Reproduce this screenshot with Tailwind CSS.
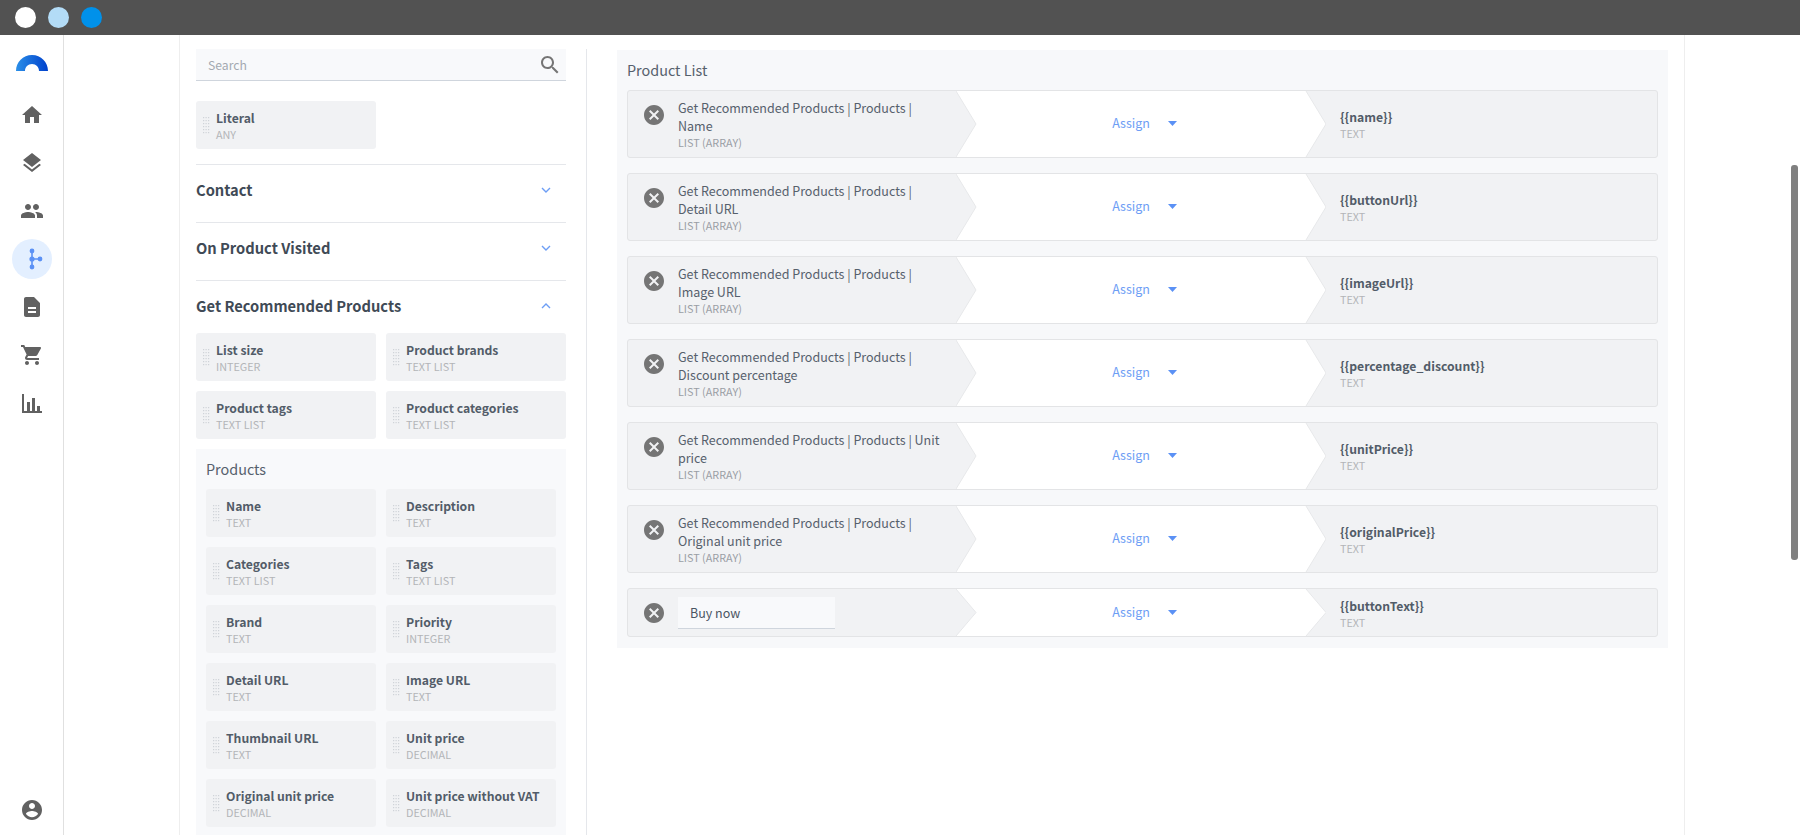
<!DOCTYPE html>
<html lang="en">

<head>
    <meta charset="UTF-8">
    <meta name="viewport" content="width=device-width, initial-scale=1.0">
    <title>Journey Builder</title>
    <script src="https://cdn.jsdelivr.net/npm/@tailwindcss/browser@4"></script>
</head>

<body class="h-screen overflow-hidden bg-white font-['Noto_Sans_CJK_JP','Liberation_Sans',sans-serif] text-[#4b5563]">
    <!-- Top bar -->
    <header class="flex h-[35px] items-center gap-[12px] bg-[#525252] pl-[15px]">
        <span class="h-[21px] w-[21px] rounded-full bg-white"></span>
        <span class="h-[21px] w-[21px] rounded-full bg-[#b3dcf7]"></span>
        <span class="h-[21px] w-[21px] rounded-full bg-[#0091ea]"></span>
    </header>

    <div class="flex h-[800px]">
        <!-- Sidebar -->
        <aside class="flex w-[64px] shrink-0 flex-col items-center border-r border-[#e0e0e0] text-[#616161]">
            <svg class="mt-[20px] h-[16px] w-[32px]" viewBox="0 0 32 16">
                <defs>
                    <linearGradient id="logoGrad" x1="0" x2="1" y1="0" y2="0">
                        <stop offset="0" stop-color="#2b8fe8"></stop>
                        <stop offset="1" stop-color="#0041cc"></stop>
                    </linearGradient>
                </defs>
                <path fill="url(#logoGrad)" d="M0 16C0 7 7 0 16 0s16 7 16 16H23C23 12 20 9 16 9s-7 3-7 7z"></path>
            </svg>
            <svg class="mt-[32px] h-[24px] w-[24px]" viewBox="0 0 24 24" fill="currentColor"><path d="M10 20v-6h4v6h5v-8h3L12 3 2 12h3v8z"></path></svg>
            <svg class="mt-[24px] h-[24px] w-[24px]" viewBox="0 0 24 24" fill="currentColor"><path d="M11.99 18.54l-7.37-5.73L3 14.07l9 7 9-7-1.63-1.27-7.38 5.74zM12 16l7.36-5.73L21 9l-9-7-9 7 1.63 1.27L12 16z"></path></svg>
            <svg class="mt-[24px] h-[24px] w-[24px]" viewBox="0 0 24 24" fill="currentColor"><path d="M16 11c1.66 0 2.99-1.34 2.99-3S17.66 5 16 5c-1.66 0-3 1.34-3 3s1.34 3 3 3zm-8 0c1.66 0 2.99-1.34 2.99-3S9.66 5 8 5C6.34 5 5 6.34 5 8s1.34 3 3 3zm0 2c-2.33 0-7 1.17-7 3.5V19h14v-2.5c0-2.33-4.67-3.5-7-3.5zm8 0c-.29 0-.62.02-.97.05 1.16.84 1.97 1.97 1.97 3.45V19h6v-2.5c0-2.33-4.67-3.5-7-3.5z"></path></svg>
            <div class="mt-[16px] flex h-[40px] w-[40px] items-center justify-center rounded-full bg-[#e3efff]">
                <svg class="h-[24px] w-[24px]" viewBox="0 0 24 24" fill="#5b91f5" stroke="#5b91f5" stroke-width="1.6">
                    <path d="M12 4v16M12 12h8"></path>
                    <circle cx="12" cy="4" r="1.6"></circle>
                    <circle cx="12" cy="12" r="1.8"></circle>
                    <circle cx="12" cy="20" r="1.6"></circle>
                    <circle cx="20" cy="12" r="1.6"></circle>
                </svg>
            </div>
            <svg class="mt-[16px] h-[24px] w-[24px]" viewBox="0 0 24 24" fill="currentColor"><path d="M14 2H6c-1.1 0-1.99.9-1.99 2L4 20c0 1.1.89 2 1.99 2H18c1.1 0 2-.9 2-2V8l-6-6zm2 16H8v-2h8v2zm0-4H8v-2h8v2z"></path></svg>
            <svg class="mt-[24px] h-[24px] w-[24px]" viewBox="0 0 24 24" fill="currentColor"><path d="M7 18c-1.1 0-1.99.9-1.99 2S5.9 22 7 22s2-.9 2-2-.9-2-2-2zM1 2v2h2l3.6 7.59-1.35 2.45c-.16.28-.25.61-.25.96 0 1.1.9 2 2 2h12v-2H7.42c-.14 0-.25-.11-.25-.25l.03-.12.9-1.63h7.45c.75 0 1.41-.41 1.75-1.03l3.58-6.49c.08-.14.12-.31.12-.48 0-.55-.45-1-1-1H5.21l-.94-2H1zm16 16c-1.1 0-1.99.9-1.99 2s.89 2 1.99 2 2-.9 2-2-.9-2-2-2z"></path></svg>
            <svg class="mt-[24px] h-[24px] w-[24px]" viewBox="0 0 24 24" fill="currentColor"><path d="M2 3h2v17h18v2H2zM7 11h3v9H7zM12 7h3v13h-3zM17 15h3v5h-3z"></path></svg>
            <svg class="mt-auto mb-[13px] h-[24px] w-[24px]" viewBox="0 0 24 24" fill="currentColor"><path d="M12 2C6.48 2 2 6.48 2 12s4.48 10 10 10 10-4.48 10-10S17.52 2 12 2zm0 3c1.66 0 3 1.34 3 3s-1.34 3-3 3-3-1.34-3-3 1.34-3 3-3zm0 14.2c-2.5 0-4.71-1.28-6-3.22.03-1.99 4-3.08 6-3.08 1.99 0 5.97 1.09 6 3.08-1.29 1.94-3.5 3.22-6 3.22z"></path></svg>
        </aside>

        <!-- Main panel -->
        <main class="ml-[115px] flex h-full w-[1506px] border-x border-[#eeeeee] pt-[14px] pl-[16px]">
            <!-- Field picker -->
            <section class="w-[370px] shrink-0">
                <div class="flex h-[32px] items-center justify-between border-b border-[#cfd5dd] bg-[#f8f9fb] pr-[4px] pl-[12px]">
                    <span class="pt-[2px] text-[12.2px] text-[#a3a9b1]">Search</span>
                    <svg class="h-[24px] w-[24px]" viewBox="0 0 24 24" fill="#757575"><path d="M15.5 14h-.79l-.28-.27C15.41 12.59 16 11.11 16 9.5 16 5.91 13.09 3 9.5 3S3 5.91 3 9.5 5.91 16 9.5 16c1.61 0 3.09-.59 4.23-1.57l.27.28v.79l5 4.99L20.49 19l-4.99-5zm-6 0C7.01 14 5 11.99 5 9.5S7.01 5 9.5 5 14 7.01 14 9.5 11.99 14 9.5 14z"></path></svg>
                </div>
                <div id="literalGrid" class="mt-[20px] grid grid-cols-2 gap-[10px]"></div>

                <div class="mt-[15px] flex h-[58px] items-center justify-between border-t border-[#e5e7eb] pb-[7px]">
                    <h3 class="text-[14.7px] leading-[22px] font-bold text-[#3f4a56]">Contact</h3>
                    <svg class="mr-[15px] h-[6px] w-[10px]" viewBox="0 0 10 6" fill="none" stroke="#6d9ef5" stroke-width="1.4"><path d="M1 1l4 4 4-4"></path></svg>
                </div>
                <div class="flex h-[58px] items-center justify-between border-t border-[#e5e7eb] pb-[7px]">
                    <h3 class="text-[14.7px] leading-[22px] font-bold text-[#3f4a56]">On Product Visited</h3>
                    <svg class="mr-[15px] h-[6px] w-[10px]" viewBox="0 0 10 6" fill="none" stroke="#6d9ef5" stroke-width="1.4"><path d="M1 1l4 4 4-4"></path></svg>
                </div>
                <div class="flex h-[53px] items-center justify-between border-t border-[#e5e7eb] pb-[2px]">
                    <h3 class="text-[14.7px] leading-[22px] font-bold text-[#3f4a56]">Get Recommended Products</h3>
                    <svg class="mr-[15px] h-[6px] w-[10px]" viewBox="0 0 10 6" fill="none" stroke="#6d9ef5" stroke-width="1.4"><path d="M1 5l4-4 4 4"></path></svg>
                </div>
                <div id="recommendedGrid" class="grid grid-cols-2 gap-[10px]"></div>

                <div class="mt-[10px] bg-[#f8f9fb] px-[10px] pb-[10px]">
                    <h4 class="flex h-[40px] items-center text-[14.4px] font-normal text-[#56606c]">Products</h4>
                    <div id="productsGrid" class="grid grid-cols-2 gap-[10px]"></div>
                </div>
            </section>

            <!-- Divider -->
            <div class="mr-[30px] ml-[20px] h-full w-px shrink-0 bg-[#e5e7eb]"></div>

            <!-- Mapping list -->
            <section class="mt-[1px] h-[598px] w-[1051px] shrink-0 self-start bg-[#f7f8fa] px-[10px] pt-[1px]">
                <h2 class="flex h-[39px] items-center pb-[2px] text-[14.4px] font-normal text-[#56606c]">Product List</h2>
                <div id="mappingRows" class="flex flex-col gap-[15px]"></div>
            </section>
        </main>
    </div>

    <!-- Scrollbar thumb -->
    <div class="fixed top-[165px] right-[2px] h-[395px] w-[7px] rounded-[3px] bg-[#808080]"></div>

    <script>
        const literalFields = [{ name: "Literal", type: "ANY" }];
        const recommendedFields = [
            { name: "List size", type: "INTEGER" },
            { name: "Product brands", type: "TEXT LIST" },
            { name: "Product tags", type: "TEXT LIST" },
            { name: "Product categories", type: "TEXT LIST" }
        ];
        const productFields = [
            { name: "Name", type: "TEXT" },
            { name: "Description", type: "TEXT" },
            { name: "Categories", type: "TEXT LIST" },
            { name: "Tags", type: "TEXT LIST" },
            { name: "Brand", type: "TEXT" },
            { name: "Priority", type: "INTEGER" },
            { name: "Detail URL", type: "TEXT" },
            { name: "Image URL", type: "TEXT" },
            { name: "Thumbnail URL", type: "TEXT" },
            { name: "Unit price", type: "DECIMAL" },
            { name: "Original unit price", type: "DECIMAL" },
            { name: "Unit price without VAT", type: "DECIMAL" }
        ];
        const mappings = [
            { source: "Get Recommended Products | Products | Name", target: "{{name}}" },
            { source: "Get Recommended Products | Products | Detail URL", target: "{{buttonUrl}}" },
            { source: "Get Recommended Products | Products | Image URL", target: "{{imageUrl}}" },
            { source: "Get Recommended Products | Products | Discount percentage", target: "{{percentage_discount}}" },
            { source: "Get Recommended Products | Products | Unit price", target: "{{unitPrice}}" },
            { source: "Get Recommended Products | Products | Original unit price", target: "{{originalPrice}}" },
            { input: "Buy now", target: "{{buttonText}}" }
        ];

        function dragHandle() {
            let dots = "";
            for (let y = 0; y < 6; y++) {
                for (let x = 0; x < 3; x++) {
                    dots += `<rect x="${x * 2.5}" y="${y * 3}" width="1.2" height="1.2"></rect>`;
                }
            }
            return `<svg class="mt-[16px] h-[17px] w-[7px] shrink-0" viewBox="0 0 7 17" fill="#cfd3d8">${dots}</svg>`;
        }

        function renderFields(id, fields) {
            const grid = document.getElementById(id);
            fields.forEach(field => {
                const card = document.createElement("div");
                card.className = "flex h-[48px] gap-[6px] rounded-[3px] bg-[#f1f2f4] pl-[7px]";
                card.innerHTML = `${dragHandle()}
                    <div class="pt-[8px]">
                        <p class="text-[12.2px] leading-[18px] font-bold whitespace-nowrap text-[#525c68]">${field.name}</p>
                        <p class="text-[10.8px] leading-[14px] text-[#b3b5b8]">${field.type}</p>
                    </div>`;
                grid.appendChild(card);
            });
        }

        function renderMappings() {
            const list = document.getElementById("mappingRows");
            mappings.forEach(row => {
                const height = row.input ? 47 : 66;
                const mid = height / 2;
                const el = document.createElement("div");
                el.className = "flex rounded-[3px] border border-[#e3e4e6] bg-[#f1f2f4]";
                const left = row.input
                    ? `<div class="flex h-full items-center pl-[50px]"><div class="flex h-[32px] w-[157px] items-center border-b border-[#cfd5dd] bg-[#f8f9fb] pt-[2px] pl-[12px] text-[12.5px] text-[#4b5563]">${row.input}</div></div>`
                    : `<div class="pt-[8px] pl-[50px]">
                            <p class="w-[266px] text-[12.5px] leading-[18px] text-[#56606c]">${row.source}</p>
                            <p class="text-[10.8px] leading-[15px] text-[#9a9ea5]">LIST (ARRAY)</p>
                       </div>`;
                const targetClass = row.input ? "pt-[8px] pl-[14px]" : "pt-[17px] pl-[14px]";
                el.innerHTML = `
                    <div class="relative w-[328px] shrink-0">
                        <svg class="absolute top-[12px] left-[14px] h-[24px] w-[24px]" viewBox="0 0 24 24" fill="#757575"><path d="M12 2C6.47 2 2 6.47 2 12s4.47 10 10 10 10-4.47 10-10S17.53 2 12 2zm5 13.59L15.59 17 12 13.41 8.41 17 7 15.59 10.59 12 7 8.41 8.41 7 12 10.59 15.59 7 17 8.41 13.41 12 17 15.59z"></path></svg>
                        ${left}
                    </div>
                    <div class="relative flex w-[370px] shrink-0 items-center justify-center pb-[1px] pl-[7px]" style="height:${height}px">
                        <svg class="absolute inset-0 h-full w-full" viewBox="0 0 370 ${height}">
                            <polygon fill="#ffffff" points="0,0 350,0 370,${mid} 350,${height} 0,${height} 20,${mid}"></polygon>
                            <path fill="none" stroke="#e7e8ea" d="M0 0L20 ${mid}L0 ${height}M350 0L370 ${mid}L350 ${height}"></path>
                        </svg>
                        <span class="relative text-[12.5px] text-[#6d9ef5]">Assign</span>
                        <svg class="relative ml-[18px] h-[5px] w-[9px]" viewBox="0 0 9 5" fill="#5b91f5"><path d="M0 0h9L4.5 5z"></path></svg>
                    </div>
                    <div class="${targetClass}">
                        <p class="text-[12.2px] leading-[18px] font-bold text-[#525c68]">${row.target}</p>
                        <p class="text-[10.8px] leading-[14px] text-[#b3b5b8]">TEXT</p>
                    </div>`;
                list.appendChild(el);
            });
        }

        renderFields("literalGrid", literalFields);
        renderFields("recommendedGrid", recommendedFields);
        renderFields("productsGrid", productFields);
        renderMappings();
    </script>
</body>

</html>
